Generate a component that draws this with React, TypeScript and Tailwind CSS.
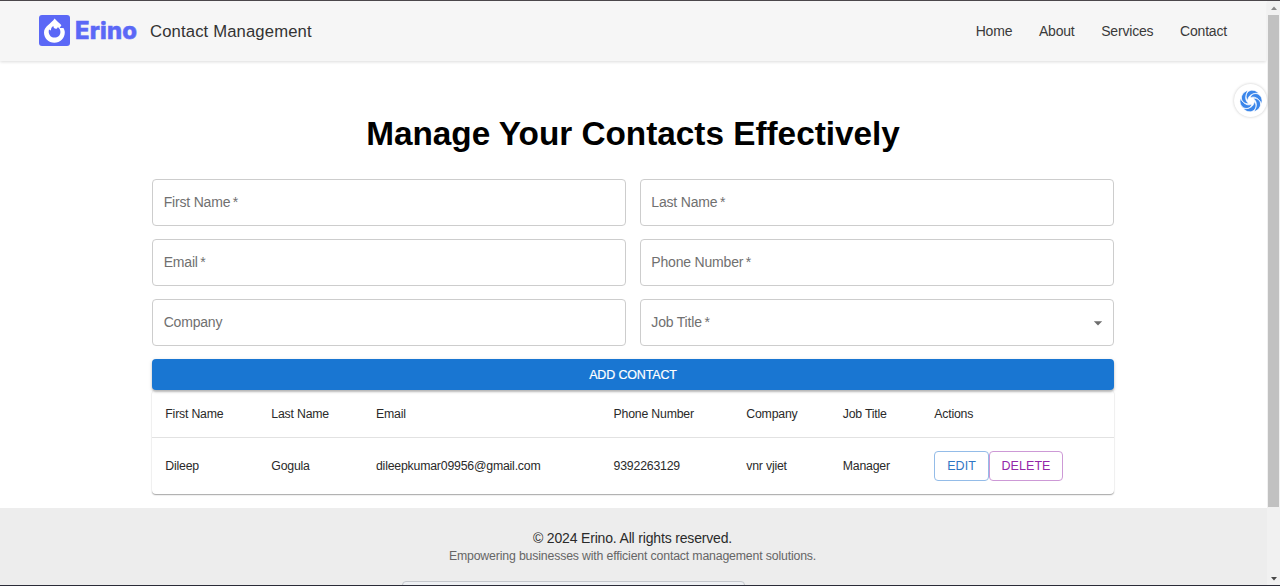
import React from "react";

const navItems = ["Home", "About", "Services", "Contact"];

const columns = [
  { label: "First Name", value: "Dileep", width: "w-[106px]" },
  { label: "Last Name", value: "Gogula", width: "w-[104.7px]" },
  { label: "Email", value: "dileepkumar09956@gmail.com", width: "w-[237.6px]" },
  { label: "Phone Number", value: "9392263129", width: "w-[132.7px]" },
  { label: "Company", value: "vnr vjiet", width: "w-[96.5px]" },
  { label: "Job Title", value: "Manager", width: "w-[91.5px]" },
];

function Logo() {
  return (
    <div className="flex items-center gap-[5px] text-[#5b68f6]">
      <svg width="31" height="31" viewBox="0 0 31 31">
        <rect width="31" height="31" rx="3" fill="currentColor" />
        <path
          d="M15.6 3.6 C17.6 6.2 20.4 8 22.4 10.2 L20.6 13 L24.4 13 C25.3 14.4 25.8 15.8 25.8 17.6 C25.8 23.4 21.2 27.8 15.4 27.8 C9.4 27.8 5 23.2 5 17.6 C5 11.4 12 9 15.6 3.6 Z"
          fill="#fff"
        />
        <path
          d="M10 14.4 L12 15.4 C11.8 13.4 12.8 11.8 14.4 11 C14.4 12.8 15.4 13.8 16.8 13.8 C18 13.8 18.6 13 18.8 12 C20.8 13.6 21.6 15.4 21.4 17.4 C21.2 20.4 18.8 22.6 15.6 22.6 C11.2 22.6 8.8 18.4 10 14.4 Z"
          fill="currentColor"
        />
      </svg>
      <span className="w-[63px] font-['Inter',sans-serif] text-[23.8px] leading-[31px] font-extrabold tracking-[0.2px] [-webkit-text-stroke:0.5px_#5b68f6]">
        Erino
      </span>
    </div>
  );
}

function Field({ label, required = true, select = false }: { label: string; required?: boolean; select?: boolean }) {
  return (
    <div className="flex h-[46.7px] items-center justify-between rounded-[4px] border border-[#cdcdcd] pr-[5px] pb-px pl-[10.7px] text-[14px] tracking-[-0.19px] text-[#707070]">
      <span>
        {label}
        {required && "\u2009*"}
      </span>
      {select && (
        <svg className="mt-px" width="20" height="20" viewBox="0 0 24 24" fill="#6d6d6d">
          <path d="M7 10l5 5 5-5z" />
        </svg>
      )}
    </div>
  );
}

function Swirl() {
  return (
    <svg width="24" height="24" viewBox="-12 -12 24 24" fill="#3b86ea">
      {[0, 60, 120, 180, 240, 300].map((a) => (
        <path
          key={a}
          transform={`rotate(${a})`}
          d="M-3.2 -0.6 C-3 -5 0.8 -8 7.6 -7.8 C4.6 -11.4 -0.6 -11.6 -3.2 -9 C-5.6 -6.6 -5.4 -2.8 -3.2 -0.6 Z"
          stroke="#fff"
          strokeWidth="0.7"
        />
      ))}
    </svg>
  );
}

export default function App() {
  return (
    <div className="relative flex h-[586px] w-[1280px] overflow-hidden bg-white font-['Liberation_Sans',Arial,sans-serif] text-[#2a2a2a]">
      <div className="flex w-[1266px] shrink-0 flex-col">
        <header className="flex h-[61px] shrink-0 items-center justify-between bg-[#f6f6f6] pr-[39px] pl-[39px] shadow-[0_1px_3px_rgba(0,0,0,0.14)]">
          <div className="flex items-center gap-[12px]">
            <Logo />
            <span className="pt-px text-[16.67px] tracking-[0.14px] text-[#333]">Contact Management</span>
          </div>
          <nav className="flex gap-[26.6px] pt-[2px] text-[14px] tracking-[-0.18px] text-[#3a3a3a]">
            {navItems.map((n) => (
              <a key={n}>{n}</a>
            ))}
          </nav>
        </header>

        <main className="mx-auto h-[447px] w-[962px] shrink-0 pt-[52px]">
          <h1 className="text-center text-[33.35px] leading-[41px] font-bold tracking-[-0.01px] text-black">
            Manage Your Contacts Effectively
          </h1>
          <div className="mt-[25.4px] grid grid-cols-2 gap-[13.3px]">
            <Field label="First Name" />
            <Field label="Last Name" />
            <Field label="Email" />
            <Field label="Phone Number" />
            <Field label="Company" required={false} />
            <Field label="Job Title" select />
          </div>
          <button className="relative mt-[13.3px] flex h-[31px] w-full items-center justify-center rounded-[4px] bg-[#1976d2] pt-[2px] text-[12.5px] tracking-[-0.15px] text-white shadow-[0_2px_2px_rgba(0,0,0,0.22),0_1px_4px_rgba(0,0,0,0.12)] [-webkit-text-stroke:0.2px_#fff]">
            ADD CONTACT
          </button>
          <div className="h-[104px] rounded-[4px] bg-white shadow-[0_1px_1px_rgba(0,0,0,0.25),0_1px_2px_rgba(0,0,0,0.14)]">
            <table className="w-full table-fixed border-collapse text-left text-[12.3px] tracking-[-0.2px]">
              <thead>
                <tr className="h-[47px] border-b border-[#e2e2e2]">
                  {columns.map((c) => (
                    <th key={c.label} className={`${c.width} pt-[2px] pl-[13.3px] font-normal`}>
                      {c.label}
                    </th>
                  ))}
                  <th className="pt-[2px] pl-[13.3px] font-normal">Actions</th>
                </tr>
              </thead>
              <tbody>
                <tr className="h-[56px]">
                  {columns.map((c) => (
                    <td key={c.label} className="pt-[2px] pl-[13.3px]">
                      {c.value}
                    </td>
                  ))}
                  <td className="pl-[13.3px]">
                    <div className="flex h-[30px] text-[12.5px] tracking-[0.05px]">
                      <button className="w-[54.5px] rounded-[4px] border border-[#94bce8] pt-px text-[#2f75c4]">EDIT</button>
                      <button className="w-[74.5px] rounded-[4px] border border-[#cd99d6] pt-px text-[#9427a8]">DELETE</button>
                    </div>
                  </td>
                </tr>
              </tbody>
            </table>
          </div>
        </main>

        <footer className="flex h-[90px] w-[1267px] shrink-0 flex-col items-center bg-[#ededed] pt-[20px]">
          <p className="mr-[2px] text-[14px] leading-[20px] tracking-[-0.17px]">© 2024 Erino. All rights reserved.</p>
          <p className="mr-[2px] text-[12.3px] leading-[16px] tracking-[-0.16px] text-[#666]">
            Empowering businesses with efficient contact management solutions.
          </p>
          <div className="mt-[17px] mr-[120px] h-[30px] w-[343px] shrink-0 rounded-[4px] border border-[#c4c7cc] bg-[#eef0f3]" />
        </footer>
      </div>

      <aside className="ml-px flex flex-1 flex-col items-center bg-[#f1f1f1] pt-[6px] pb-[5px]">
        <svg width="6" height="4" viewBox="0 0 6 4" fill="#8a8a8a">
          <path d="M0 4L3 0.5L6 4Z" />
        </svg>
        <div className="mt-[5px] h-[492px] w-[11px] bg-[#c1c1c1]" />
        <svg className="mt-auto" width="6" height="4" viewBox="0 0 6 4" fill="#484848">
          <path d="M0 0L3 3.5L6 0Z" />
        </svg>
      </aside>

      <div className="absolute top-[84px] left-[1234px] flex h-[33px] w-[33px] items-center justify-center rounded-full bg-white shadow-[0_0_3px_rgba(0,0,0,0.22)]">
        <Swirl />
      </div>
      <div className="absolute inset-x-0 top-0 h-px bg-[#4b474b]" />
      <div className="absolute inset-x-0 bottom-0 h-px bg-[#2b2c38]" />
    </div>
  );
}
